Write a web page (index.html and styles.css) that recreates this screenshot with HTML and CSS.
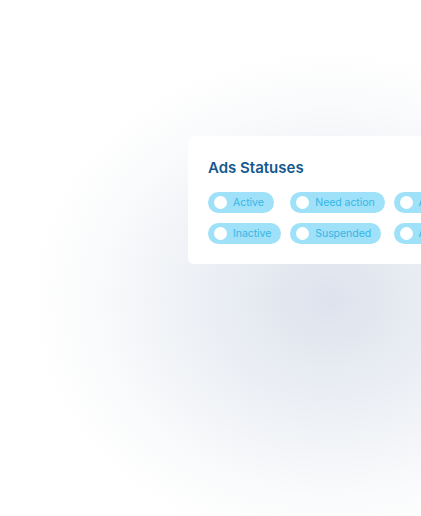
FILE: index.html
```html
<!DOCTYPE html>
<html lang="en">

<head>
    <meta charset="utf-8">
    <meta name="viewport" content="width=device-width, initial-scale=1.0">
    <title>Ads Statuses</title>
    <link rel="stylesheet" href="styles.css">
</head>

<body>
    <section class="card">
        <h2>Ads Statuses</h2>
        <div class="statuses">
            <span class="chip"><i class="dot"></i>Active</span>
            <span class="chip"><i class="dot"></i>Need action</span>
            <span class="chip"><i class="dot"></i>Archived</span>
            <span class="chip"><i class="dot"></i>Inactive</span>
            <span class="chip"><i class="dot"></i>Suspended</span>
            <span class="chip"><i class="dot"></i>All</span>
        </div>
    </section>
</body>

</html>
```

FILE: styles.css
```css
html,
body {
    margin: 0;
    height: 516px;
    overflow: hidden;
}

body {
    font-family: Inter, "Noto Sans", sans-serif;
    background: radial-gradient(ellipse 300px 250px at 330px 300px, #dde3ed 0%, #edf0f5 45%, #fafbfc 80%, #ffffff 100%);
}

.card {
    margin: 136px 0 0 188px;
    width: 320px;
    height: 128px;
    box-sizing: border-box;
    padding: 22px 0 0 20px;
    background: #ffffff;
    border-radius: 6px;
}

.card h2 {
    margin: 0 0 14px;
    font-size: 15px;
    font-weight: 600;
    line-height: 20px;
    color: #15598f;
}

.statuses {
    display: grid;
    grid-template-columns: repeat(3, max-content);
    column-gap: 9px;
    row-gap: 10px;
}

.chip {
    display: flex;
    align-items: center;
    gap: 6px;
    height: 21px;
    padding: 0 10px 0 6px;
    background: #9ee1f8;
    border-radius: 11px;
    font-size: 10.6px;
    letter-spacing: -0.1px;
    color: #38b6e6;
    white-space: nowrap;
    justify-self: start;
}

.dot {
    width: 13px;
    height: 13px;
    border-radius: 50%;
    background: #ffffff;
}
```
